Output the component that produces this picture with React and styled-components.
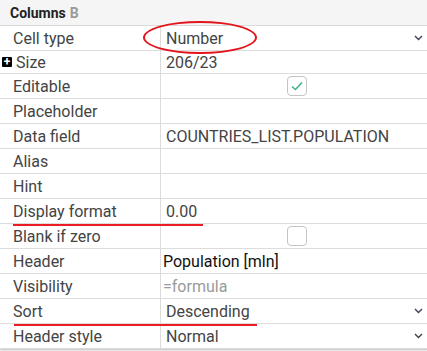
import React from 'react';
import styled, { createGlobalStyle } from 'styled-components';

const GlobalStyle = createGlobalStyle`
  html, body {
    margin: 0;
    padding: 0;
    background: #fff;
  }
  body {
    font-family: Roboto, "Liberation Sans", sans-serif;
  }
`;

const rows = [
  { label: 'Cell type', value: 'Number', select: true },
  { label: 'Size', value: '206/23', expand: true, height: 22 },
  { label: 'Editable', check: true, checked: true },
  { label: 'Placeholder' },
  { label: 'Data field', value: 'COUNTRIES_LIST.POPULATION' },
  { label: 'Alias' },
  { label: 'Hint' },
  { label: 'Display format', value: '0.00' },
  { label: 'Blank if zero', check: true },
  { label: 'Header', value: 'Population [mln]', input: true, tone: 'strong' },
  { label: 'Visibility', value: '=formula', input: true, tone: 'muted' },
  { label: 'Sort', value: 'Descending', select: true },
  { label: 'Header style', value: 'Normal', select: true },
];

const Chevron = () => (
  <svg width="9" height="6" viewBox="0 0 9 6">
    <path d="M1 1 L4.5 4.5 L8 1" fill="none" stroke="#3a4250" strokeWidth="1.4" />
  </svg>
);

const Check = () => (
  <svg width="14" height="12" viewBox="0 0 14 12">
    <path d="M2 6.5 L5.5 9.5 L12 2.5" fill="none" stroke="#3bb08f" strokeWidth="1.6" />
  </svg>
);

const App = () => (
  <>
    <GlobalStyle />
    <Panel>
      <Title>
        Columns <Dim>B</Dim>
      </Title>
      <Table>
        {rows.map(row => (
          <Row key={row.label} $h={row.height || 24}>
            <Label $expand={row.expand}>
              {row.expand && <Expand>+</Expand>}
              {row.label}
            </Label>
            <Value $input={row.input} $tone={row.tone} $center={row.check}>
              {row.check ? (
                <Box>{row.checked && <Check />}</Box>
              ) : (
                <span>{row.value}</span>
              )}
              {row.select && (
                <Arrow>
                  <Chevron />
                </Arrow>
              )}
            </Value>
          </Row>
        ))}
        <Ellipse />
        <Underline style={{ left: 13, width: 190, top: 198 }} />
        <Underline style={{ left: 14, width: 243, top: 298 }} />
      </Table>
    </Panel>
  </>
);

export default App;

const Panel = styled.div`
  width: 427px;
  height: 351px;
  overflow: hidden;
`;

const Title = styled.div`
  height: 25px;
  padding-left: 10px;
  display: flex;
  align-items: center;
  background: #f5f5f5;
  border-bottom: 1px solid #dcdcdc;
  font-size: 14px;
  font-weight: 700;
  color: #222;
`;

const Dim = styled.span`
  color: #9a9a9a;
  margin-left: 4px;
`;

const Table = styled.div`
  position: relative;
  border-bottom: 1px solid #d0d0d0;
  box-shadow: 0 1px 2px rgba(0, 0, 0, 0.15);
`;

const Row = styled.div`
  display: grid;
  grid-template-columns: 160px 1fr;
  height: ${p => p.$h}px;
  border-bottom: 1px solid #dcdcdc;
  font-size: 16px;
  color: #444;
  &:last-of-type {
    border-bottom: none;
  }
`;

const Label = styled.div`
  display: flex;
  align-items: center;
  padding-left: ${p => (p.$expand ? '2px' : '13px')};
`;

const Expand = styled.span`
  width: 10px;
  height: 10px;
  margin-right: 4px;
  background: #000;
  border-radius: 1px;
  color: #fff;
  font-size: 12px;
  font-weight: 700;
  line-height: 10px;
  text-align: center;
`;

const Value = styled.div`
  display: flex;
  align-items: center;
  justify-content: ${p => (p.$center ? 'center' : 'space-between')};
  border-left: 1px solid #dcdcdc;
  padding-left: ${p => (p.$input ? '2px' : '5px')};
  padding-right: 4px;
  color: ${p => (p.$tone === 'strong' ? '#111' : p.$tone === 'muted' ? '#9a9a9a' : '#444')};
`;

const Arrow = styled.span`
  display: flex;
`;

const Box = styled.span`
  width: 18px;
  height: 18px;
  border: 1px solid #c4c4c4;
  border-radius: 4px;
  display: flex;
  align-items: center;
  justify-content: center;
  margin-left: 4px;
`;

const Ellipse = styled.div`
  position: absolute;
  left: 143px;
  top: -5px;
  width: 110px;
  height: 29px;
  border: 2px solid #e3141c;
  border-radius: 50%;
`;

const Underline = styled.div`
  position: absolute;
  height: 2px;
  background: #ec1c24;
`;
